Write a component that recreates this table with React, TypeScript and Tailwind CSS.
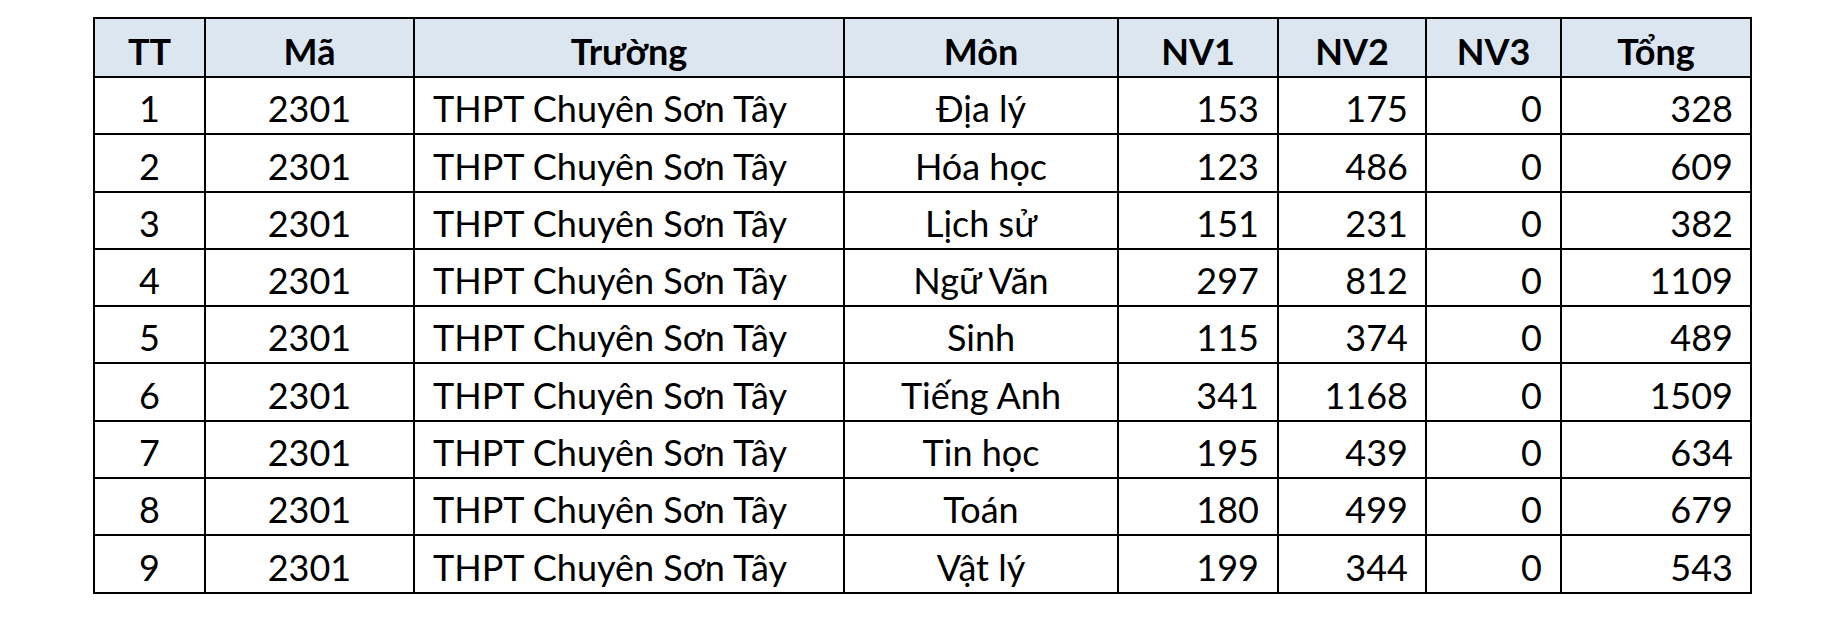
const headers = ["TT", "Mã", "Trường", "Môn", "NV1", "NV2", "NV3", "Tổng"];

const rows = [
  { tt: 1, ma: "2301", truong: "THPT Chuyên Sơn Tây", mon: "Địa lý", nv1: 153, nv2: 175, nv3: 0, tong: 328 },
  { tt: 2, ma: "2301", truong: "THPT Chuyên Sơn Tây", mon: "Hóa học", nv1: 123, nv2: 486, nv3: 0, tong: 609 },
  { tt: 3, ma: "2301", truong: "THPT Chuyên Sơn Tây", mon: "Lịch sử", nv1: 151, nv2: 231, nv3: 0, tong: 382 },
  { tt: 4, ma: "2301", truong: "THPT Chuyên Sơn Tây", mon: "Ngữ Văn", nv1: 297, nv2: 812, nv3: 0, tong: 1109 },
  { tt: 5, ma: "2301", truong: "THPT Chuyên Sơn Tây", mon: "Sinh", nv1: 115, nv2: 374, nv3: 0, tong: 489 },
  { tt: 6, ma: "2301", truong: "THPT Chuyên Sơn Tây", mon: "Tiếng Anh", nv1: 341, nv2: 1168, nv3: 0, tong: 1509 },
  { tt: 7, ma: "2301", truong: "THPT Chuyên Sơn Tây", mon: "Tin học", nv1: 195, nv2: 439, nv3: 0, tong: 634 },
  { tt: 8, ma: "2301", truong: "THPT Chuyên Sơn Tây", mon: "Toán", nv1: 180, nv2: 499, nv3: 0, tong: 679 },
  { tt: 9, ma: "2301", truong: "THPT Chuyên Sơn Tây", mon: "Vật lý", nv1: 199, nv2: 344, nv3: 0, tong: 543 },
];

const cell = "border-2 border-black align-bottom pb-[7px] leading-[36px]";

export default function App() {
  return (
    <div className="h-[637px] w-[1827px] bg-white pl-[93px] pt-[17px] font-['Lato','Liberation_Sans',sans-serif] text-[36px] text-black">
      <table className="w-[1657px] table-fixed border-collapse">
        <colgroup>
          <col className="w-[111px]" />
          <col className="w-[209px]" />
          <col className="w-[430px]" />
          <col className="w-[274px]" />
          <col className="w-[160px]" />
          <col className="w-[148px]" />
          <col className="w-[135px]" />
          <col className="w-[190px]" />
        </colgroup>
        <thead>
          <tr className="h-[59px] bg-[#dce6f1]">
            {headers.map((h) => (
              <th key={h} className={`${cell} text-center font-bold`}>
                {h}
              </th>
            ))}
          </tr>
        </thead>
        <tbody>
          {rows.map((r) => (
            <tr key={r.tt} className="h-[57.3px]">
              <td className={`${cell} text-center`}>{r.tt}</td>
              <td className={`${cell} text-center`}>{r.ma}</td>
              <td className={`${cell} pl-[18px] text-left`}>{r.truong}</td>
              <td className={`${cell} text-center`}>{r.mon}</td>
              <td className={`${cell} pr-[18px] text-right`}>{r.nv1}</td>
              <td className={`${cell} pr-[17px] text-right`}>{r.nv2}</td>
              <td className={`${cell} pr-[18px] text-right`}>{r.nv3}</td>
              <td className={`${cell} pr-[17px] text-right`}>{r.tong}</td>
            </tr>
          ))}
        </tbody>
      </table>
    </div>
  );
}
